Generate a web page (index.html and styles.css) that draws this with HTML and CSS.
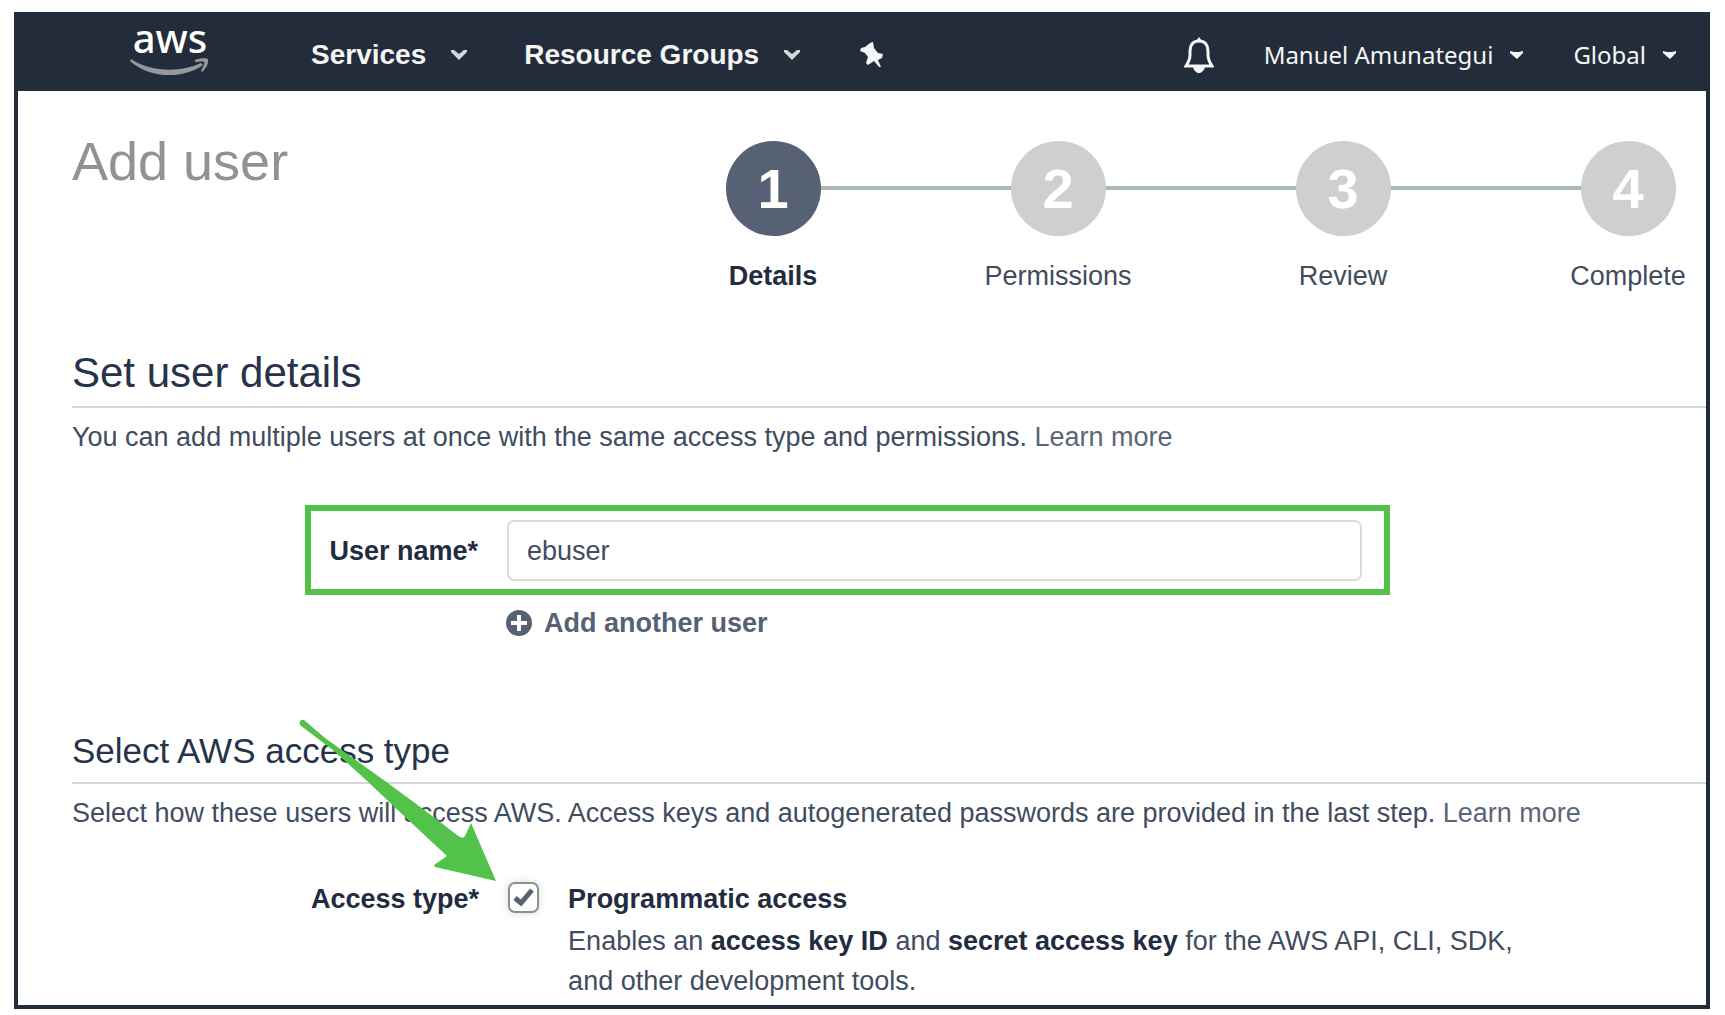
FILE: index.html
```html
<!DOCTYPE html>
<html lang="en">
<head>
<meta charset="utf-8">
<meta name="viewport" content="width=device-width, initial-scale=1">
<title>Add user</title>
<link rel="stylesheet" href="styles.css">
</head>
<body>
<div class="window">
  <header class="topbar">
    <a class="logo" href="#" aria-label="aws home">
      <span class="logo-text">aws</span>
      <svg class="logo-smile" width="80" height="18" viewBox="0 0 80 18" aria-hidden="true">
        <path d="M1 1C20 14 50 15 71 5L73 7C52 22 18 20 0 3Z"/>
        <path d="M65 2C70 0 76 0 78 1C79 5 76 11 72 14L71 13C73 9 75 5 74 4C72 3 68 4 65 4Z"/>
      </svg>
    </a>
    <nav class="menu">
      <button class="menu-item" type="button">Services
        <svg class="caret" width="18" height="12" viewBox="0 0 18 12" aria-hidden="true"><path d="M1 1H4L9 5L14 1H17V3L9 11L1 3Z"/></svg>
      </button>
      <button class="menu-item" type="button">Resource Groups
        <svg class="caret" width="18" height="12" viewBox="0 0 18 12" aria-hidden="true"><path d="M1 1H4L9 5L14 1H17V3L9 11L1 3Z"/></svg>
      </button>
      <button class="icon-button" type="button" aria-label="Pin shortcuts">
        <svg width="24" height="26" viewBox="0 0 24 26" aria-hidden="true"><path d="M10 1L13 0L14 6L18 11L23 12L22 16L18 18L21 25L19 25L14 19L8 23L6 21L8 15L5 11L0 9L1 6L5 5Z"/></svg>
      </button>
    </nav>
    <div class="account">
      <button class="icon-button" type="button" aria-label="Notifications">
        <svg class="bell" width="30" height="36" viewBox="0 0 30 36" aria-hidden="true"><path class="bell-body" d="M15 4C9 4 6 8 6 14V18C6 23 4 26 2 29H28C26 26 24 23 24 18V14C24 8 21 4 15 4Z"/><path d="M12 4L15 0L18 4ZM9 30H21C20 34 17 36 15 36C13 36 10 34 9 30Z"/></svg>
      </button>
      <button class="account-item" type="button">Manuel Amunategui
        <svg width="13" height="8" viewBox="0 0 13 8" aria-hidden="true"><path d="M0 0L4 1H9L13 0V2L7 8L0 2Z"/></svg>
      </button>
      <button class="account-item" type="button">Global
        <svg width="13" height="8" viewBox="0 0 13 8" aria-hidden="true"><path d="M0 0L4 1H9L13 0V2L7 8L0 2Z"/></svg>
      </button>
    </div>
  </header>

  <main class="page">
    <div class="intro">
      <h1>Add user</h1>
      <ol class="steps">
        <li class="step current" aria-current="step"><span class="step-number">1</span>Details</li>
        <li class="step"><span class="step-number">2</span>Permissions</li>
        <li class="step"><span class="step-number">3</span>Review</li>
        <li class="step"><span class="step-number">4</span>Complete</li>
      </ol>
    </div>

    <section class="details">
      <h2>Set user details</h2>
      <p>You can add multiple users at once with the same access type and permissions. <a href="#">Learn more</a></p>
      <div class="name-row">
        <label class="field-label" for="username">User name*</label>
        <input class="name-input" id="username" type="text" value="ebuser">
      </div>
      <button class="add-user" type="button">
        <svg width="26" height="26" viewBox="0 0 26 26" aria-hidden="true"><circle cx="13" cy="13" r="13"/><path d="M13 5V21M5 13H21"/></svg>
        Add another user
      </button>
    </section>

    <section class="access">
      <h3>Select AWS access type</h3>
      <p>Select how these users will access AWS. Access keys and autogenerated passwords are provided in the last step. <a href="#">Learn more</a></p>
      <div class="access-row">
        <span class="field-label" id="access-label">Access type*</span>
        <span class="check">
          <input type="checkbox" id="programmatic" checked aria-describedby="access-label">
          <svg width="22" height="20" viewBox="0 0 22 20" aria-hidden="true"><path d="M2 11L8 16L19 3"/></svg>
        </span>
        <div class="option">
          <label for="programmatic">Programmatic access</label>
          <div class="option-text">Enables an <b>access key ID</b> and <b>secret access key</b> for the AWS API, CLI, SDK,<br>and other development tools.</div>
        </div>
      </div>
      <svg class="arrow" width="198" height="164" viewBox="0 0 198 164" aria-hidden="true"><path d="M2 1L5 1L26 19L86 62L124 90L158 116Q164 121 166 117L172 104L197 162L136 148L135 146L148 137L105 97L66 60L35 32L1 6Q0 3 2 1Z"/></svg>
    </section>
  </main>
</div>
</body>
</html>
```
FILE: styles.css
```css
* {
  box-sizing: border-box;
}

body {
  margin: 0;
  padding: 12px 15px 8px 14px;
  background: #fff;
  color: #414c60;
  font: 27px/40px "Liberation Sans", Arial, sans-serif;
}

button {
  padding: 0;
  border: 0;
  background: none;
  color: inherit;
  font: inherit;
  line-height: inherit;
  white-space: nowrap;
}

h1, h2, h3, p, ol {
  margin: 0;
  padding: 0;
  font-weight: normal;
}

a {
  color: #5c6678;
  text-decoration: none;
}

.window {
  border: 4px solid #232c3b;
  border-top: 0;
}

/* Top bar */
.topbar {
  display: flex;
  align-items: center;
  height: 79px;
  padding: 6px 30px 0 112px;
  background: #232c3b;
  color: #f4f6f4;
}

.topbar svg {
  fill: currentColor;
}

.logo {
  display: flex;
  flex-direction: column;
  align-items: center;
  align-self: flex-start;
  width: 80px;
  color: #fff;
}

.logo-text {
  font: 500 40px/40px "Noto Sans", sans-serif;
}

.topbar .logo-smile {
  fill: #96989b;
}

.menu {
  display: flex;
  align-items: center;
  margin-left: 101px;
  gap: 56px;
}

.menu-item {
  display: flex;
  align-items: center;
  gap: 24px;
  font-size: 28px;
  font-weight: bold;
}

.menu-item .caret {
  fill: #d3d7d6;
}

.icon-button {
  display: flex;
}

.menu .icon-button {
  padding-left: 3px;
}

.account {
  display: flex;
  align-items: center;
  gap: 50px;
  margin-left: auto;
}

.bell .bell-body {
  fill: none;
  stroke: currentColor;
  stroke-width: 3;
}

.account-item {
  display: flex;
  align-items: center;
  gap: 17px;
  font: 24px/40px "Noto Sans", sans-serif;
}

/* Title and wizard steps */
.page {
  padding: 50px 0 4px 54px;
}

.intro {
  display: flex;
  align-items: flex-start;
  justify-content: space-between;
  padding-right: 6px;
}

h1 {
  color: #909395;
  font-size: 54px;
  line-height: 40px;
}

.steps {
  position: relative;
  display: flex;
  flex: 0 1 999px;
  justify-content: space-between;
  list-style: none;
}

.steps::before {
  content: "";
  position: absolute;
  top: 45px;
  left: 72px;
  right: 72px;
  height: 4px;
  background: #adbab0;
}

.step {
  position: relative;
  display: flex;
  flex-direction: column;
  align-items: center;
  gap: 20px;
  width: 144px;
}

.step-number {
  width: 95px;
  height: 95px;
  border-radius: 50%;
  background: #cdd0ce;
  color: #fff;
  font-size: 56px;
  font-weight: bold;
  line-height: 96px;
  text-align: center;
}

.step.current {
  color: #232c3f;
  font-weight: bold;
}

.current .step-number {
  background: #566173;
}

/* Sections */
h2, h3 {
  border-bottom: 2px solid #d5d7d5;
  color: #27334a;
}

h2 {
  font-size: 42px;
  line-height: 66px;
}

h3 {
  font-size: 35px;
  line-height: 62px;
}

.details {
  margin-top: 44px;
}

.details p,
.access p {
  margin-top: 9px;
}

.field-label {
  flex: 0 0 167px;
  color: #232c3f;
  font-weight: bold;
  text-align: right;
  white-space: nowrap;
}

.name-row {
  display: flex;
  align-items: center;
  gap: 29px;
  margin: 48px 316px 0 233px;
  padding: 9px 22px 8px 0;
  border: 6px solid #52c24b;
}

.name-input {
  flex: 1;
  min-width: 0;
  height: 61px;
  padding: 2px 18px 0;
  border: 2px solid #dadcda;
  border-radius: 7px;
  background: #fff;
  color: #414c60;
  font: inherit;
}

.add-user {
  display: flex;
  align-items: center;
  gap: 12px;
  margin: 8px 0 0 434px;
  color: #566173;
  font-weight: bold;
}

.add-user svg {
  fill: #566173;
  stroke: #fff;
  stroke-width: 4;
}

.add-user circle {
  stroke: none;
}

.access {
  position: relative;
  margin-top: 77px;
}

.access-row {
  display: flex;
  gap: 29px;
  margin: 46px 0 0 239px;
}

.check {
  position: relative;
  flex: none;
  width: 31px;
  height: 31px;
  margin-top: 3px;
}

.check input {
  display: block;
  width: 31px;
  height: 31px;
  margin: 0;
  appearance: none;
  border: 2px solid #87958d;
  border-radius: 7px;
  background: #fff;
  box-shadow: 0 0 8px #d5d8d5;
}

.check svg {
  position: absolute;
  top: 5px;
  left: 5px;
  fill: none;
  stroke: #566173;
  stroke-width: 5;
  pointer-events: none;
}

.option-text {
  margin-top: 2px;
}

.option label,
.option b {
  color: #232c3f;
  font-weight: bold;
}

.arrow {
  position: absolute;
  top: -1px;
  left: 227px;
  fill: #52c24b;
  pointer-events: none;
}
```
